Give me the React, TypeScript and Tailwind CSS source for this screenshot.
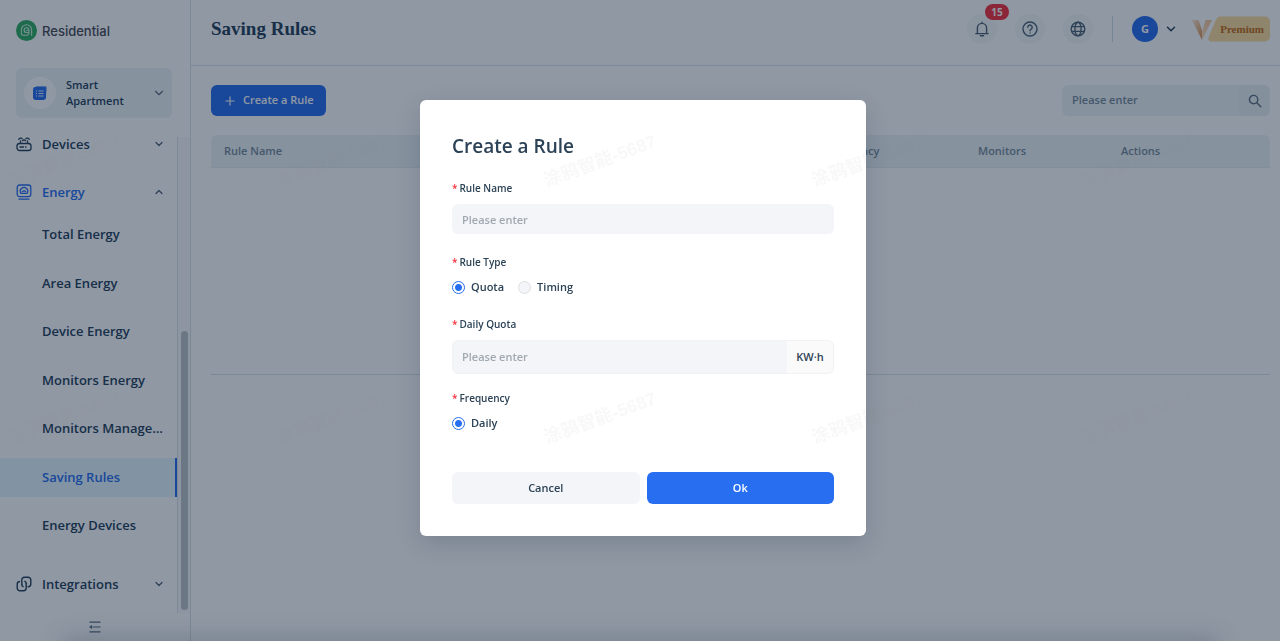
import { ChevronDown, ChevronUp, Plus } from "lucide-react";

const subItems = [
    "Total Energy",
    "Area Energy",
    "Device Energy",
    "Monitors Energy",
    "Monitors Management",
    "Saving Rules",
    "Energy Devices",
];
const activeItem = "Saving Rules";

const LogoIcon = () => (
    <svg className="size-[21px]" viewBox="0 0 21 21" fill="none" aria-hidden="true">
        <circle cx="10.5" cy="10.5" r="10.5" fill="#2fae62" />
        <path d="M8.3 15.3H7a1.6 1.6 0 0 1-1.6-1.6V9.8a5.1 5.1 0 0 1 10.2 0v5.4" stroke="#cdeed9" strokeWidth="1.1" strokeLinecap="round" />
        <path d="M12.9 10a2.4 2.4 0 1 0-2.4 2.5h2.4v.6a2.2 2.2 0 0 1-2.2 2.2H8.3M12.9 12.5V10.2h-2.3" stroke="#cdeed9" strokeWidth="1.1" strokeLinecap="round" />
    </svg>
);

const SpaceIcon = () => (
    <svg className="size-4" viewBox="0 0 16 16" fill="none" aria-hidden="true">
        <path d="M4 1.3h9.2c1 0 1.6.7 1.5 1.600l-.8 9.400H3z" fill="#5b8df6" />
        <rect x="1" y="2" width="13" height="13" rx="2.4" fill="#276ef1" />
        <path d="M4 6h1M6.5 6h5M4 8.5h1M6.5 8.5h5M4 11h1M6.5 11h5" stroke="#dbe7fd" strokeWidth="1.1" />
    </svg>
);

const DevicesIcon = () => (
    <svg className="size-4" viewBox="0 0 16 16" fill="none" stroke="currentColor" strokeWidth="1.3" strokeLinecap="round" aria-hidden="true">
        <rect x="1" y="7.5" width="14" height="7" rx="2.6" />
        <path d="M4 11h3.500M9.500 11h.500M4.500 7.200V5M11.500 7.200V5M2.800 3.400c.8-1.400 2.200-1.800 3.300-.8M13.200 3.400c-.8-1.400-2.200-1.800-3.300-.8M6.400 4.600c1-.8 2.200-.8 3.200 0" />
    </svg>
);

const EnergyIcon = () => (
    <svg className="size-4" viewBox="0 0 16 16" fill="none" stroke="currentColor" strokeWidth="1.3" strokeLinecap="round" aria-hidden="true">
        <rect x="1.2" y="1" width="13.6" height="11.6" rx="2.4" />
        <path d="M5 9.400a3.700 3.700 0 1 1 6 0zM6.400 7.600c.8-1 2.400-1 3.200 0M3 15.100h10" />
    </svg>
);

const LinkIcon = () => (
    <svg className="size-4" viewBox="0 0 16 16" fill="none" stroke="currentColor" strokeWidth="1.4" strokeLinecap="round" aria-hidden="true">
        <path d="M5.800 8.600V4A2.700 2.700 0 0 1 8.500 1.300h3.600A2.700 2.700 0 0 1 14.800 4v4a2.700 2.700 0 0 1-2.700 2.700" />
        <path d="M10.200 7.200v4.900a2.700 2.700 0 0 1-2.700 2.700H3.900a2.700 2.700 0 0 1-2.700-2.700V8.200a2.700 2.700 0 0 1 2.300-2.700" />
        <path d="M5.800 8.600a2 2 0 0 0 1.400 2M10.200 7.200a2 2 0 0 0-1.400-1.900" />
    </svg>
);

const BellIcon = () => (
    <svg className="size-4" viewBox="0 0 16 16" fill="none" stroke="currentColor" strokeWidth="1.4" strokeLinecap="round" aria-hidden="true">
        <path d="M3.400 12.400V7a4.600 4.600 0 0 1 9.200 0v5.400M1.800 12.600h12.400M8 2.200V1.200M6.400 14.800h3.200" />
    </svg>
);

const HelpIcon = () => (
    <svg className="size-4" viewBox="0 0 16 16" fill="none" stroke="currentColor" strokeWidth="1.4" strokeLinecap="round" aria-hidden="true">
        <circle cx="8" cy="8" r="7" />
        <path d="M5.800 6.300a2.200 2.200 0 1 1 3.400 1.800c-.8.5-1.200.8-1.200 1.600M8 11.900v.1" />
    </svg>
);

const GlobeIcon = () => (
    <svg className="size-4" viewBox="0 0 16 16" fill="none" stroke="currentColor" strokeWidth="1.4" aria-hidden="true">
        <circle cx="8" cy="8" r="6.800" />
        <ellipse cx="8" cy="8" rx="3.100" ry="6.800" />
        <path d="M1.600 5.600h12.800M1.600 10.400h12.800" />
    </svg>
);

const SearchIcon = () => (
    <svg className="size-3.5" viewBox="0 0 14 14" fill="none" stroke="currentColor" strokeWidth="1.4" strokeLinecap="round" aria-hidden="true">
        <circle cx="5.6" cy="5.6" r="4.2" />
        <path d="M8.800 8.800l4 4" />
    </svg>
);

const CollapseIcon = () => (
    <svg className="size-3" viewBox="0 0 12 12" fill="none" stroke="currentColor" strokeWidth="1.2" aria-hidden="true">
        <path d="M0.500 1.200h11M3.500 6h8M0.500 10.800h11" />
        <path d="M0 6l3-2v4z" fill="currentColor" stroke="none" />
    </svg>
);

const PremiumMark = () => (
    <svg className="h-[26px] w-[78px]" viewBox="0 0 78 26" aria-hidden="true">
        <defs>
            <linearGradient id="vipLeft" x1="0" y1="0" x2="1" y2="1">
                <stop offset="0" stopColor="#ffe7cf" />
                <stop offset="1" stopColor="#d98c4a" />
            </linearGradient>
            <linearGradient id="vipRight" x1="1" y1="0" x2="0" y2="1">
                <stop offset="0" stopColor="#f3c496" />
                <stop offset="1" stopColor="#ffe0bf" />
            </linearGradient>
        </defs>
        <path d="M28 .5h45a5 5 0 0 1 5 5v15a5 5 0 0 1-5 5H20c-3 0-4.500-2-3.300-4.600L24 3.500Q25.500.5 28 .5z" fill="#fbdc9c" />
        <path d="M0 4h6.500l4.500 13-1 7z" fill="url(#vipLeft)" />
        <path d="M13.500 4H20L10 24V16z" fill="url(#vipRight)" />
    </svg>
);

const Sidebar = () => (
    <aside className="flex h-full w-[191px] shrink-0 flex-col border-r border-[#d9e3ea]">
        <div className="flex items-center gap-[5px] pt-5 pl-4">
            <LogoIcon />
            <span className="font-['Inter',sans-serif] text-[13px] leading-5 font-medium text-[#4a4a55]">Residential</span>
        </div>
        <button className="mt-[27px] ml-4 flex h-[50px] w-39 items-center rounded-md bg-[#eef4f7] pr-1.5 pl-2 text-left">
            <span className="flex size-8 items-center justify-center rounded-full bg-white">
                <SpaceIcon />
            </span>
            <span className="ml-2.5 flex-1 text-[11px] leading-4 font-semibold">
                Smart
                <br />
                Apartment
            </span>
            <ChevronDown className="size-3.5 text-[#5b6f80]" strokeWidth={2} />
        </button>

        <div className="mt-[19px] flex min-h-0 flex-1">
            <nav className="flex min-w-0 flex-1 flex-col text-[13px] leading-5 font-semibold">
                <a href="#devices" className="flex h-3.5 items-center gap-2.5 pr-3 pl-4">
                    <DevicesIcon />
                    <span className="flex-1">Devices</span>
                    <ChevronDown className="size-3 text-[#4d6276]" strokeWidth={2.5} />
                </a>
                <a href="#energy" className="mt-[22px] flex h-[38px] items-center gap-2.5 pr-3 pl-4 text-[#276ef1]">
                    <EnergyIcon />
                    <span className="flex-1">Energy</span>
                    <ChevronUp className="size-3 text-[#4d6276]" strokeWidth={2.5} />
                </a>
                <ul className="mt-1 flex flex-1 flex-col justify-between">
                    {subItems.map((item) => (
                        <li key={item}>
                            <a
                                href="#energy"
                                className={
                                    item === activeItem
                                        ? "block border-r-2 border-[#276ef1] bg-[#e6f7ff] py-[9px] pl-[42px] text-[#276ef1] leading-[21px]"
                                        : "block truncate py-[9px] pr-3 pl-[42px] leading-[21px]"
                                }
                            >
                                {item}
                            </a>
                        </li>
                    ))}
                </ul>
                <a href="#integrations" className="mt-5 mb-2.5 flex h-[38px] items-center gap-2.5 pr-3 pl-4">
                    <LinkIcon />
                    <span className="flex-1">Integrations</span>
                    <ChevronDown className="size-3 text-[#4d6276]" strokeWidth={2.5} />
                </a>
            </nav>
            {/* scroll track */}
            <div className="flex w-[13px] flex-col justify-end border-l border-[#d9e3ea] bg-[#f8fafb] pr-0.5 pb-[3px] pl-[3px]">
                <div className="h-[59%] rounded-full bg-[#bcc3c8]" />
            </div>
        </div>
        <button aria-label="Collapse menu" className="flex h-7 items-center justify-center text-[#5b6f80]">
            <CollapseIcon />
        </button>
    </aside>
);

const Header = () => (
    <header className="flex h-[66px] items-center border-b border-[#d9e8ee] pr-2.5 pb-2 pl-5">
        <h1 className="flex-1 font-['Liberation_Serif',serif] text-[19px] leading-7 font-bold">Saving Rules</h1>
        <div className="flex items-center gap-[18px] text-[#4d6276]">
            <button aria-label="Notifications" className="relative flex size-[30px] items-center justify-center rounded-full bg-[#f5f9fa]">
                <BellIcon />
                <span className="absolute -top-2.5 left-[18px] h-4 w-6 rounded-full bg-[#f5313d] text-[10px] leading-4 font-bold text-white">15</span>
            </button>
            <button aria-label="Help" className="flex size-[30px] items-center justify-center rounded-full bg-[#f5f9fa]">
                <HelpIcon />
            </button>
            <button aria-label="Language" className="flex size-[30px] items-center justify-center rounded-full bg-[#f5f9fa]">
                <GlobeIcon />
            </button>
        </div>
        <div className="mx-[19px] h-[26px] w-px bg-[#cfdde4]" />
        <button className="flex items-center gap-1.5">
            <span className="size-[26px] rounded-full bg-[#276ef1] text-[11px] leading-[26px] font-bold text-white">G</span>
            <ChevronDown className="size-3.5" strokeWidth={2.5} />
        </button>
        <a href="#premium" className="relative ml-3.5 block">
            <PremiumMark />
            <span className="absolute inset-y-0 right-1.5 font-['Liberation_Serif',serif] text-[11px] leading-[26px] font-bold text-[#c46a10]">Premium</span>
        </a>
    </header>
);

const RulesPage = () => (
    <main className="pt-[19px] pr-2.5 pl-5">
        <div className="flex items-center justify-between">
            <button className="flex h-[31px] items-center gap-1.5 rounded-md bg-[#276ef1] px-3 text-[11px] font-semibold text-white">
                <Plus className="size-3.5" strokeWidth={2} />
                Create a Rule
            </button>
            <form className="flex h-[31px] w-52 overflow-hidden rounded-md bg-[#eef4f7]">
                <input aria-label="Search rules" placeholder="Please enter" className="min-w-0 flex-1 pl-2.5 text-[11px] font-semibold outline-none placeholder:text-[#768a9a]" />
                <button aria-label="Search" className="flex w-[31px] items-center justify-center bg-[#e9f0f3] text-[#5b6f80]">
                    <SearchIcon />
                </button>
            </form>
        </div>
        <div className="mt-[19px] h-60 border-b border-[#d9e3ea]">
            <table className="w-full table-fixed border-separate border-spacing-0 text-left text-[11px]">
                <thead className="text-[#768a9a]">
                    <tr className="h-[33px] *:border-b *:border-[#e3edf1] *:bg-[#eef4f7] *:px-[13px] *:font-semibold">
                        <th className="rounded-tl-md">Rule Name</th>
                        <th className="w-[154px]">Frequency</th>
                        <th className="w-[143px]">Monitors</th>
                        <th className="w-[162px] rounded-tr-md">Actions</th>
                    </tr>
                </thead>
            </table>
        </div>
    </main>
);

const FieldLabel = ({ text, htmlFor }: { text: string; htmlFor?: string }) => (
    <label htmlFor={htmlFor} className="mb-2 flex h-4 gap-0.5 text-[10px] leading-4 font-semibold">
        <span className="text-[#f5313d]">*</span>
        {text}
    </label>
);

const Radio = ({ name, text, checked }: { name: string; text: string; checked?: boolean }) => (
    <label className="flex items-center gap-1.5 text-[11px] leading-[18px] font-semibold">
        <input
            type="radio"
            name={name}
            defaultChecked={checked}
            className="size-[13px] appearance-none rounded-full border border-[#dcdfe3] bg-[#f4f5f8] checked:border-[#276ef1] checked:bg-[radial-gradient(circle,#276ef1_3px,white_4px)]"
        />
        {text}
    </label>
);

const CreateRuleModal = () => (
    <div className="fixed inset-0 flex items-center justify-center bg-[#081a32]/45 pb-[5px] pl-1.5">
        <form role="dialog" aria-label="Create a Rule" className="w-[446px] rounded-md bg-white p-8 text-[#2c4256] shadow-[0_8px_24px_rgba(8,26,50,0.16)]">
            <h2 className="text-[19px] leading-7 font-semibold">Create a Rule</h2>
            <div className="mt-5">
                <FieldLabel text="Rule Name" htmlFor="ruleName" />
                <input id="ruleName" placeholder="Please enter" className="block h-[30px] w-full rounded-md bg-[#f4f5f8] px-2.5 text-[11px] font-semibold outline-none placeholder:text-[#a0a8b1]" />
            </div>
            <fieldset className="mt-5">
                <FieldLabel text="Rule Type" />
                <div className="flex gap-3.5">
                    <Radio name="ruleType" text="Quota" checked />
                    <Radio name="ruleType" text="Timing" />
                </div>
            </fieldset>
            <div className="mt-5">
                <FieldLabel text="Daily Quota" htmlFor="dailyQuota" />
                <div className="flex h-[34px] overflow-hidden rounded-md border border-[#f1f2f4] bg-[#f4f5f8]">
                    <input id="dailyQuota" placeholder="Please enter" className="min-w-0 flex-1 pl-[9px] text-[11px] font-semibold outline-none placeholder:text-[#a0a8b1]" />
                    <span className="w-[46px] bg-[#fafafa] text-center text-[11px] leading-8 font-semibold">KW·h</span>
                </div>
            </div>
            <fieldset className="mt-4">
                <FieldLabel text="Frequency" />
                <Radio name="frequency" text="Daily" checked />
            </fieldset>
            <div className="mt-10 grid grid-cols-2 gap-[7px] text-[11px] font-semibold">
                <button type="button" className="h-8 rounded-md bg-[#f4f5f8]">Cancel</button>
                <button type="button" className="h-8 rounded-md bg-[#276ef1] text-white">Ok</button>
            </div>
        </form>
    </div>
);

const Watermark = () => (
    <div aria-hidden="true" className="pointer-events-none fixed inset-0 overflow-hidden pt-8">
        <div className="-ml-[70px] grid auto-rows-[257px] grid-cols-[repeat(auto-fill,268px)] font-['Liberation_Sans','Noto_Sans_CJK_SC',sans-serif] text-lg font-bold text-[#808080]/6">
            {Array.from({ length: 10 }, (_, i) => (
                <span key={i} className="flex items-center justify-center whitespace-nowrap">
                    <span className="-rotate-20">涂鸦智能-5687</span>
                </span>
            ))}
        </div>
    </div>
);

const App = () => (
    <div className="flex h-screen overflow-hidden bg-white font-['Open_Sans',sans-serif] text-[#24405a]">
        <Sidebar />
        <div className="min-w-0 flex-1">
            <Header />
            <RulesPage />
        </div>
        <CreateRuleModal />
        {/* soft shade along the bottom edge */}
        <div className="pointer-events-none fixed inset-x-16 top-full h-4 shadow-[0_0_24px_2px_rgba(40,60,80,0.3)]" />
        <Watermark />
    </div>
);

export default App;
